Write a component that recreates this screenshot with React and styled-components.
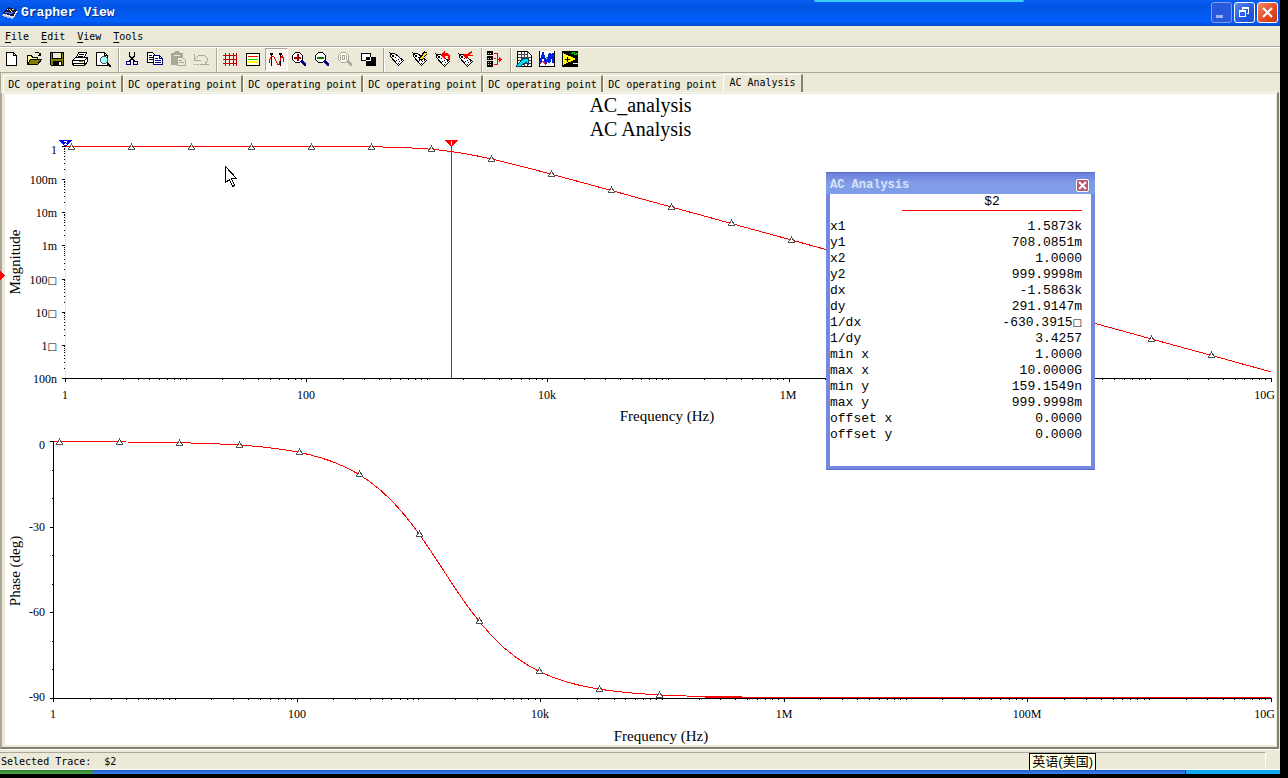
import { useState } from 'react';
import styled, { createGlobalStyle, css } from 'styled-components';

const menus = ['File', 'Edit', 'View', 'Tools'];

const tabs = [
  ...Array.from({ length: 6 }, (_, i) => ({ id: i, label: 'DC operating point' })),
  { id: 6, label: 'AC Analysis' },
];

const cursorRows = [
  ['x1', '1.5873k'],
  ['y1', '708.0851m'],
  ['x2', '1.0000'],
  ['y2', '999.9998m'],
  ['dx', '-1.5863k'],
  ['dy', '291.9147m'],
  ['1/dx', '-630.3915□'],
  ['1/dy', '3.4257'],
  ['min x', '1.0000'],
  ['max x', '10.0000G'],
  ['min y', '159.1549n'],
  ['max y', '999.9998m'],
  ['offset x', '0.0000'],
  ['offset y', '0.0000'],
];

// RC low-pass: 1k / 100n
const CUTOFF = 1591.5;
const magnitudeLog = (d) => -0.5 * Math.log10(1 + (10 ** d / CUTOFF) ** 2);
const phaseDeg = (d) => (-Math.atan(10 ** d / CUTOFF) * 180) / Math.PI;

const Tag = () => (
  <>
    <path d='M1.5 5.5v-3h4l9 7-5 5z' fill='#fff' stroke='#000' />
    <path d='M3 4h2v2H3zM6 6h1v1H6zM7 9h1v1H7zM9 8h1v1H9zM10 10h1v1h-1zM9 12h1v1H9zM12 9h1v1h-1z' fill='#000' />
    <path d='M0 1l3 3' stroke='#000' />
  </>
);

const Lens = ({ color = '#000', handle = '#000080' }) => (
  <>
    <path d='M4.5 1.5h4l3 3v4l-3 3h-4l-3-3v-4z' fill='#fff' stroke={color} />
    <path d='M10 10l5 5M11 9.5l4 4' stroke={handle} strokeWidth='2' />
  </>
);

const icons = {
  New: <path d='M3.5 1.5h7l3 3v10h-10zM10.5 1.5v3h3' fill='#fff' stroke='#000' />,
  Open: (
    <>
      <path d='M1.5 13.5v-9h4l1 2h5v3' fill='#ffff99' stroke='#000' />
      <path d='M1.5 13.5l3-5h11l-4 5z' fill='#808000' stroke='#000' />
      <path d='M8.5 2.5l1-1h3l2 3M14.5 1.5v3h-3' fill='none' stroke='#000' />
    </>
  ),
  Save: (
    <>
      <path d='M1.5 1.5h13v13h-12l-1-1z' fill='#808000' stroke='#000' />
      <path d='M4 2h8v6H4z' fill='#ece9d8' />
      <path d='M3.5 1.5v6h9v-6' fill='none' stroke='#000' />
      <path d='M4 10h9v4H4z' fill='#000' />
      <path d='M10 11h2v3h-2z' fill='#fff' />
    </>
  ),
  Print: (
    <>
      <path d='M4.5 6.5l2-5h8l-2 5z' fill='#fff' stroke='#000' />
      <path d='M7 3.5h5M6 5.5h5' stroke='#000' />
      <path d='M.5 9.5l3-3h12v4l-3 4h-11l-1-2z' fill='#fff' stroke='#000' />
      <path d='M.5 9.5h12l3-3M12.5 9.5v5M1 12.5h11' fill='none' stroke='#000' />
      <path d='M7 10.5h4' stroke='#808000' />
    </>
  ),
  Preview: (
    <>
      <path d='M1.5 1.5h8l3 3v10h-11zM9.5 1.5v3h3' fill='#fff' stroke='#000' />
      <circle cx='9' cy='9' r='3.5' fill='#9ff' stroke='#555' />
      <path d='M12 12l4 3.5' stroke='#000' strokeWidth='2' />
    </>
  ),
  Cut: (
    <>
      <path d='M5.5 1v4l5 5M10.5 1v4l-5 5' fill='none' stroke='#000' />
      <circle cx='4.5' cy='12' r='2' fill='none' stroke='#000080' />
      <circle cx='11.5' cy='12' r='2' fill='none' stroke='#000080' />
    </>
  ),
  Copy: (
    <>
      <path d='M.5 1.5h5l3 3v7h-8z' fill='#fff' stroke='#000' />
      <path d='M2 4.5h3M2 6.5h5M2 8.5h5' stroke='#000' />
      <path d='M6.5 4.5h6l3 3v6h-9z' fill='#fff' stroke='#000080' />
      <path d='M8 7.5h3M8 9.5h6M8 11.5h6M12.5 4.5v3h3' fill='none' stroke='#000080' />
    </>
  ),
  Paste: (
    <>
      <path d='M1 2h3l1-2h4l1 2h3v12H1z' fill='#aca899' />
      <path d='M4 4h6' stroke='#ece9d8' />
      <path d='M7.5 6.5h5l3 3v5h-8z' fill='#ece9d8' stroke='#aca899' />
      <path d='M9 9.5h3M9 11.5h5' stroke='#aca899' />
    </>
  ),
  Undo: (
    <>
      <path d='M1.5 3v6h6M2 8l4-4h5l3 3v3l-2 3' fill='none' stroke='#aca899' />
      <path d='M1 13.5h2M4 13.5h2M7 13.5h9' stroke='#aca899' />
    </>
  ),
  Grid: (
    <path
      d='M1 4.5h14M1 8.5h14M1 12.5h14M3.5 2v13M7.5 2v13M11.5 2v13M14.5 2v13'
      fill='none'
      stroke='#c80000'
    />
  ),
  Legend: (
    <>
      <path d='M1.5 2.5h13v12h-13z' fill='#ffffe1' stroke='#000' />
      <path d='M3 5.5h10' stroke='#f00' />
      <path d='M3 8.5h10' stroke='#00d000' />
      <path d='M3 11h10' stroke='#ff0' strokeWidth='2' />
    </>
  ),
  Cursors: (
    <>
      <path d='M3.5 2v13M12.5 2v13' stroke='#000' />
      <path d='M2 2h3v2H2zM11 2h3v2h-3z' fill='#000' />
      <path d='M1.5 12v-3l2-4h2l2 4 2 4h2l1-6 2-2 1 3v3' fill='none' stroke='#e00000' />
    </>
  ),
  'Zoom In': (
    <>
      <Lens />
      <path d='M3 6.5h7M6.5 3v7' stroke='#a00000' strokeWidth='2' />
    </>
  ),
  'Zoom Out': (
    <>
      <Lens />
      <path d='M3 6.5h7' stroke='#008000' strokeWidth='2' />
    </>
  ),
  'Zoom 100%': (
    <>
      <Lens color='#aca899' handle='#aca899' />
      <path d='M3.5 4v5M5.5 4.5h2v4h-2zM9.5 4v5' fill='none' stroke='#aca899' />
    </>
  ),
  'Reverse Colors': (
    <>
      <path d='M6 6h9v8H6z' fill='#000' stroke='#000' />
      <path d='M1.5 2.5h9v7h-9z' fill='#fff' stroke='#000' />
      <path d='M6 6h4v3H6z' fill='#000' />
      <path d='M10.5 6v3.5H6' fill='none' stroke='#fff' />
    </>
  ),
  Label: <Tag />,
  'Edit Label': (
    <>
      <Tag />
      <path d='M8 9l6-8' stroke='#000' strokeWidth='4' />
      <path d='M9 8l5-6' stroke='#ffe000' strokeWidth='2' />
    </>
  ),
  'Restore Label': (
    <>
      <g transform='translate(0 1)'>
        <Tag />
      </g>
      <path d='M5 4l5-4v2h3l2 3v4h-2V6l-1-1h-2v3z' fill='#f00' />
    </>
  ),
  'Select Label': (
    <>
      <g transform='translate(0 1)'>
        <Tag />
      </g>
      <path d='M5 3h4l5-3v2l-3 2h4v1h-5l-1 3-4-3z' fill='#f00' />
    </>
  ),
  'Merge Traces': (
    <>
      <path d='M0 0h6v4H0zM0 5h6v4H0zM0 10h6v6H0z' fill='#000' />
      <path d='M1 2.5h4M1 7.5h4M1 11.5h4M1 13.5h4' stroke='#ddd' strokeDasharray='1 1' />
      <path d='M7 2.5h3v11H7M7 7.5h2M10 8.5h4' fill='none' stroke='#f00' />
      <path d='M12 6l3 2.5-3 2.5z' fill='#f00' />
    </>
  ),
  'Export to Excel': (
    <>
      <path d='M1.5.5h10l4 4v11h-14z' fill='#fff' stroke='#000' />
      <path
        d='M2 3.5h10M2 6.5h13M2 9.5h13M2 12.5h13M5.5 1v14M8.5 1v14M11.5 1v14'
        fill='none'
        stroke='#444'
      />
      <path d='M0 15l7-7-2-1h7v6l-2-2-5 4H1z' fill='#00e0f0' stroke='#003c60' />
    </>
  ),
  'Export to MathCAD': (
    <>
      <path d='M0 0h16v16H0z' fill='#fff' />
      <path d='M.5 0v15h15V0' fill='none' stroke='#000' />
      <path d='M1 12l3-9 3 9 4-10-1 10 4-10v10' fill='none' stroke='#0020e0' strokeWidth='2' />
      <path d='M1 13l3-3 2 3' fill='none' stroke='#f03030' />
      <path d='M7 6l2 2' stroke='#00b000' />
    </>
  ),
  'Export to LabVIEW': (
    <>
      <path d='M0 0h16v16H0z' fill='#000' />
      <path d='M1 2l13 6L1 14z' fill='#ffff00' />
      <path d='M9 3l3-2 1 3 3-2' fill='none' stroke='#00d000' />
      <path d='M3 8.5h5M5.5 6v5' stroke='#000' />
      <path d='M11 12.5h5' stroke='#ece9d8' />
    </>
  ),
};

const toolGroups = [
  ['New', 'Open', 'Save', 'Print', 'Preview'],
  ['Cut', 'Copy', 'Paste', 'Undo'],
  ['Grid', 'Legend', 'Cursors', 'Zoom In', 'Zoom Out', 'Zoom 100%', 'Reverse Colors'],
  ['Label', 'Edit Label', 'Restore Label', 'Select Label'],
  ['Merge Traces'],
  ['Export to Excel', 'Export to MathCAD', 'Export to LabVIEW'],
];

const disabledTools = ['Paste', 'Undo', 'Zoom 100%'];

const linePoints = (toX, toY) =>
  Array.from({ length: 101 }, (_, i) => `${toX(i / 10).toFixed(1)},${toY(i / 10).toFixed(1)}`).join(' ');

const LogTicks = ({ x0, x1, y }) => {
  const perDecade = (x1 - x0) / 10;
  let d = '';
  for (let decade = 0; decade < 10; decade += 1) {
    for (let n = 1; n < 10; n += 1) {
      const x = Math.round(x0 + (decade + Math.log10(n)) * perDecade) + 0.5;
      d += `M${x} ${y}v${n === 1 && decade % 2 === 0 ? 3 : 1}`;
    }
  }
  return <path d={`${d}M${x1 + 0.5} ${y}v3`} stroke='#000' />;
};

const Markers = ({ from, count, yAt }) =>
  Array.from({ length: count }, (_, i) => {
    const x = from + i * 60;
    const y = Math.round(yAt(x));
    return <path key={x} d={`M${x + 0.5} ${y - 3}l-3 5h6z`} fill='#fff' stroke='#505050' />;
  });

const MagnitudePlot = () => {
  const toX = (d) => 65 + d * 120.6;
  const toY = (d) => 146.5 - magnitudeLog(d) * 33.14;
  const labels = ['1', '100m', '10m', '1m', '100□', '10□', '1□', '100n'];
  let yTicks = '';
  for (let i = 0; i < 7; i += 1) {
    for (let n = 2; n < 10; n += 1) {
      yTicks += `M64 ${Math.round(146 + (i + 1 - Math.log10(n)) * 33.14) + 0.5}h1`;
    }
  }
  return (
    <Plot viewBox='5 142 1271 288' role='img' aria-label='Magnitude over frequency'>
      <path d='M65 378.5h1207' stroke='#000' />
      <LogTicks x0={65} x1={1271} y={379} />
      <path d={yTicks} stroke='#000' />
      <path d='M65.5 146v232' stroke='#ff0' />
      {labels.map((label, i) => {
        const y = Math.round(146 + i * 33.14);
        const boxed = label.endsWith('□');
        return (
          <g key={label}>
            <path d={`M62 ${y + 0.5}h3`} stroke='#000' />
            <TickText x='57' y={i === 0 ? 154 : y + 5} textAnchor='end'>
              {boxed ? label.slice(0, -1) : label}
              {boxed && <MissingGlyph>□</MissingGlyph>}
            </TickText>
          </g>
        );
      })}
      <path d='M451.5 146v232' stroke='#f00' />
      <polyline points={linePoints(toX, toY)} fill='none' stroke='#f00' />
      <Markers from={71} count={20} yAt={(x) => toY((x - 65) / 120.6)} />
      {['1', '100', '10k', '1M'].map((label, i) => (
        <TickText key={label} x={65 + i * 241} y='399' textAnchor='middle'>
          {label}
        </TickText>
      ))}
      <TickText x='1275' y='399' textAnchor='end'>10G</TickText>
      <AxisText x='667' y='421' textAnchor='middle'>Frequency (Hz)</AxisText>
      <AxisText transform='translate(20 262) rotate(-90)' textAnchor='middle'>Magnitude</AxisText>
      <path d='M59 140h13l-6 7h-1z' fill='#00f' />
      <path d='M64 141.5h3M66.5 142v1M65.5 143v1M64 144.5h3' stroke='#fff' />
      <path d='M445 140h13l-6 7h-1z' fill='#f00' />
      <path d='M451.5 141v4' stroke='#fff' />
      <path d='M0 271l5 4.5-5 4.5z' fill='#f00' />
      <path d='M225.5 166.5v16l4-3 3 7 2-1-3-7h5z' fill='#fff' stroke='#000' />
    </Plot>
  );
};

const PhasePlot = () => {
  const toX = (d) => 53 + d * 121.8;
  const toY = (d) => 441.6 - (phaseDeg(d) * 256) / 90;
  return (
    <Plot viewBox='5 430 1271 315' role='img' aria-label='Phase over frequency'>
      <polyline points={linePoints(toX, toY)} fill='none' stroke='#f00' />
      <path d='M53.5 441v257M53 698.5h1219' stroke='#000' />
      <path d='M705 697.5h98' stroke='#f00' />
      <LogTicks x0={53} x1={1271} y={699} />
      {Array.from({ length: 10 }, (_, i) => {
        const y = Math.round(441 + i * 28.55) + 0.5;
        return <path key={i} d={i % 3 ? `M52 ${y}h1` : `M50 ${y}h3`} stroke='#000' />;
      })}
      {['0', '-30', '-60', '-90'].map((label, i) => (
        <TickText key={label} x='45' y={i === 0 ? 449 : 446 + i * 85} textAnchor='end'>
          {label}
        </TickText>
      ))}
      <Markers from={59} count={11} yAt={(x) => toY((x - 53) / 121.8)} />
      {['1', '100', '10k', '1M', '100M'].map((label, i) => (
        <TickText key={label} x={53 + Math.round(i * 243.6)} y='718' textAnchor='middle'>
          {label}
        </TickText>
      ))}
      <TickText x='1275' y='718' textAnchor='end'>10G</TickText>
      <AxisText x='661' y='741' textAnchor='middle'>Frequency (Hz)</AxisText>
      <AxisText transform='translate(20 571) rotate(-90)' textAnchor='middle'>Phase (deg)</AxisText>
    </Plot>
  );
};

const App = () => {
  const [activeTab, setActiveTab] = useState(6);
  const [isPanelOpen, setPanelOpen] = useState(true);

  const togglePanel = () => {
    setPanelOpen(!isPanelOpen);
  };

  return (
    <>
      <GlobalStyle />
      <Desktop>
        <Notch />
        <TitleBar>
          <AppIcon viewBox='0 0 16 16' aria-hidden='true'>
            <path d='M0 11l5-7 11 2-5 8z' fill='#b8c4e0' />
            <path d='M1 8l5-6 9 3-4 7z' fill='#101850' />
            <path d='M1 9l10 3 4-6' fill='none' stroke='#fff' strokeDasharray='2 1' />
            <path d='M5 5l2-1 2 3 2-3 2 2' fill='none' stroke='#ff0' strokeDasharray='1 1' />
            <path d='M3 8l3-1 2 2 3-2' fill='none' stroke='#6a80f0' />
          </AppIcon>
          <Title>Grapher View</Title>
          <WindowButton type='button' aria-label='Minimize' $dim>
            <svg viewBox='0 0 19 19'><path d='M4 12h7v3H4z' fill='#9db4f0' /></svg>
          </WindowButton>
          <WindowButton type='button' aria-label='Restore'>
            <svg viewBox='0 0 19 19' shapeRendering='crispEdges'>
              <path d='M7 4h7v2H7zM7 6h1v1H7zM13 6h1v5h-2v-1h1zM4 7h7v2H4zM4 9h1v5H4zM10 9h1v5h-1zM4 13h7v1H4z' fill='#fff' />
            </svg>
          </WindowButton>
          <WindowButton type='button' aria-label='Close' $danger>
            <svg viewBox='0 0 19 19'><path d='M5 5l9 9M14 5l-9 9' stroke='#fff' strokeWidth='2' /></svg>
          </WindowButton>
        </TitleBar>
        <MenuBar>
          {menus.map((menu) => (
            <MenuButton key={menu} type='button'>
              <u>{menu[0]}</u>
              {menu.slice(1)}
            </MenuButton>
          ))}
        </MenuBar>
        <Toolbar>
          {toolGroups.map((group) => (
            <ToolGroup key={group[0]}>
              {group.map((name) => (
                <ToolButton
                  key={name}
                  type='button'
                  aria-label={name}
                  disabled={disabledTools.includes(name)}
                  $pressed={name === 'Cursors' && isPanelOpen}
                  onClick={name === 'Cursors' ? togglePanel : undefined}
                >
                  <ToolIcon viewBox='0 0 16 16'>{icons[name]}</ToolIcon>
                </ToolButton>
              ))}
            </ToolGroup>
          ))}
        </Toolbar>
        <TabBar role='tablist'>
          {tabs.map(({ id, label }) => (
            <Tab
              key={id}
              type='button'
              role='tab'
              aria-selected={activeTab === id}
              $active={activeTab === id}
              onClick={() => setActiveTab(id)}
            >
              {label}
            </Tab>
          ))}
        </TabBar>
        <Frame>
          <Sheet>
            <GraphTitle>AC_analysis</GraphTitle>
            <GraphTitle>AC Analysis</GraphTitle>
            <MagnitudePlot />
            <PhasePlot />
            {isPanelOpen && (
              <Panel>
                <PanelHeader>
                  <PanelTitle>AC Analysis</PanelTitle>
                  <PanelClose type='button' aria-label='Close' onClick={togglePanel}>
                    <svg viewBox='0 0 11 11'><path d='M2 2l7 7M9 2l-7 7' stroke='#fff' strokeWidth='2' /></svg>
                  </PanelClose>
                </PanelHeader>
                <PanelBody>
                  <CursorTable>
                    <thead>
                      <tr>
                        <NameHead />
                        <TraceHead scope='col'>$2</TraceHead>
                      </tr>
                    </thead>
                    <tbody>
                      {cursorRows.map(([name, value]) => (
                        <tr key={name}>
                          <NameCell scope='row'>{name}</NameCell>
                          <ValueCell>
                            {value.replace('□', '')}
                            {value.endsWith('□') && <PanelGlyph>□</PanelGlyph>}
                          </ValueCell>
                        </tr>
                      ))}
                    </tbody>
                  </CursorTable>
                </PanelBody>
              </Panel>
            )}
          </Sheet>
        </Frame>
        <StatusBar>
          <StatusText>
            <span>Selected Trace:</span>
            <span>$2</span>
          </StatusText>
          <LanguageTip>英语(美国)</LanguageTip>
        </StatusBar>
        <Taskbar>
          <StartEdge />
          <TrayEdge />
        </Taskbar>
      </Desktop>
    </>
  );
};

const GlobalStyle = createGlobalStyle`
  * {
    box-sizing: border-box;
  }

  body {
    margin: 0;
    background: #000000;
    color: #000000;
    font-family: 'DejaVu Sans Mono', 'Noto Sans CJK SC', monospace;
    font-size: 10px;
  }

  button {
    padding: 0;
    border: none;
    background: none;
    color: inherit;
    font: inherit;
  }
`;

const Desktop = styled.div`
  position: relative;
  display: flex;
  flex-direction: column;
  margin-right: 8px;
  background: #ece9d8;
`;

const Notch = styled.div`
  position: absolute;
  top: 0;
  right: 20%;
  width: 210px;
  height: 2px;
  border-radius: 0 0 2px 2px;
  background: #38d0f8;
`;

const TitleBar = styled.header`
  display: flex;
  align-items: center;
  gap: 2px;
  height: 26px;
  padding: 0 2px 1px;
  background: linear-gradient(#0a5cf0, #0054e3 30%, #0060fc 80%, #0048d0);
`;

const AppIcon = styled.svg`
  width: 16px;
  height: 16px;
  shape-rendering: crispEdges;
`;

const Title = styled.h1`
  flex: 1;
  margin: 0;
  padding-left: 1px;
  font-family: 'Liberation Mono', monospace;
  font-size: 13px;
  font-weight: bold;
  color: #ffffff;
  text-shadow: 1px 1px #0a2a80;
`;

const WindowButton = styled.button`
  width: 21px;
  height: 21px;
  border: 1px solid ${({ $dim }) => ($dim ? '#7f9df0' : '#ffffff')};
  border-radius: 3px;
  background: linear-gradient(135deg, #5a88f0, #2058e0 60%, #1c50d0);

  ${({ $dim }) => $dim && css`
    background: #2a58dc;
  `}

  ${({ $danger }) => $danger && css`
    background: linear-gradient(135deg, #f08a68, #e04820 60%, #c83a10);
  `}

  svg {
    display: block;
  }
`;

const MenuBar = styled.nav`
  display: flex;
  height: 22px;
  border-bottom: 1px solid #ffffff;
  box-shadow: inset 0 -1px #aca899;
`;

const MenuButton = styled.button`
  height: 20px;
  padding: 0 7px 0 5px;

  u {
    text-underline-offset: 2px;
  }
`;

const Toolbar = styled.div`
  display: flex;
  height: 25px;
  border-bottom: 1px solid #aca899;
`;

const ToolGroup = styled.div`
  display: flex;

  & + & {
    padding-left: 2px;
    margin-left: 3px;
    border-left: 1px solid #aca899;
    box-shadow: inset 1px 0 #ffffff;
  }
`;

const ToolButton = styled.button`
  display: flex;
  align-items: center;
  justify-content: center;
  width: 23px;
  height: 23px;
  padding: 0 1px 1px 0;

  ${({ $pressed }) => $pressed && css`
    border: 1px solid;
    border-color: #aca899 #ffffff #ffffff #aca899;
    background: #f6f4ec;
  `}
`;

const ToolIcon = styled.svg`
  flex: none;
  width: 16px;
  height: 16px;
  shape-rendering: crispEdges;
`;

const TabBar = styled.div`
  display: flex;
  align-items: flex-end;
  height: 20px;
  padding-left: 2px;
  border-left: 1px solid #aca899;
`;

const Tab = styled.button`
  flex: none;
  width: 120px;
  height: 17px;
  margin-bottom: 1px;
  border-top: 1px solid #ffffff;
  border-left: 1px solid #ffffff;
  border-right: 2px solid #85816f;
  white-space: nowrap;

  ${({ $active }) => $active && css`
    width: 80px;
    height: 19px;
    margin-bottom: 0;
    padding-bottom: 3px;
  `}

  &:nth-last-child(2) {
    border-right-color: transparent;
  }
`;

const Frame = styled.main`
  padding: 1px 1px 2px 3px;
  border-left: 2px solid #aca899;
  border-right: 2px solid #85816f;
  border-bottom: 2px solid #85816f;
  border-top: 1px solid #f8f7f0;
  margin-right: 1px;
  margin-top: -1px;
`;

const Sheet = styled.div`
  position: relative;
  background: #ffffff;
`;

const GraphTitle = styled.h2`
  margin: 0;
  padding-bottom: 2px;
  font-family: 'Liberation Serif', serif;
  font-size: 20px;
  font-weight: normal;
  line-height: 22px;
  text-align: center;
`;

const Plot = styled.svg`
  display: block;
  width: 100%;
  overflow: visible;
  shape-rendering: crispEdges;
`;

const TickText = styled.text`
  font-family: 'Liberation Serif', serif;
  font-size: 12px;
`;

const AxisText = styled.text`
  font-family: 'Liberation Serif', serif;
  font-size: 15px;
`;

const MissingGlyph = styled.tspan`
  font-family: 'DejaVu Sans', sans-serif;
  font-size: 10px;
`;

const Panel = styled.section`
  position: absolute;
  top: 78px;
  right: 181px;
  width: 269px;
  padding: 0 4px 3px;
  border: solid #5c6cc8;
  border-width: 1px 0;
  background: #7388de;
  font-family: 'Liberation Mono', monospace;
`;

const PanelHeader = styled.header`
  display: flex;
  align-items: center;
  justify-content: space-between;
  height: 21px;
  margin: 0 -4px;
  padding: 3px 6px 0 4px;
  background: linear-gradient(#6b80dc, #829ce8 50%, #7f9ee8);
`;

const PanelTitle = styled.h3`
  margin: 0;
  font-size: 12px;
  color: #d8e4f8;
`;

const PanelClose = styled.button`
  width: 13px;
  height: 13px;
  border: 1px solid #ffffff;
  border-radius: 2px;
  background: #b85870;

  svg {
    display: block;
  }
`;

const PanelBody = styled.div`
  padding: 0 9px 23px 0;
  background: #ffffff;
`;

const CursorTable = styled.table`
  width: 100%;
  border-collapse: separate;
  border-spacing: 0;
  font-size: 13px;
  line-height: 16px;

  th,
  td {
    padding: 0;
    font-weight: normal;
  }

  thead::after {
    content: '';
    display: block;
    height: 8px;
  }
`;

const NameHead = styled.td`
  width: 72px;
`;

const TraceHead = styled.th`
  border-bottom: 1px solid #ff0000;
`;

const NameCell = styled.th`
  text-align: left;
`;

const ValueCell = styled.td`
  text-align: right;
`;

const PanelGlyph = styled.span`
  font-family: 'DejaVu Sans', sans-serif;
  font-size: 10px;
  line-height: 1;
`;

const StatusBar = styled.footer`
  position: relative;
  height: 21px;
  padding: 2px 14px 0 0;
  border-top: 1px solid #ffffff;
  border-bottom: 1px solid #ffffff;
`;

const StatusText = styled.p`
  display: flex;
  align-items: center;
  gap: 13px;
  height: 17px;
  margin: 0;
  padding-left: 1px;
  border-top: 1px solid #aca899;
  border-right: 1px solid #ffffff;
`;

const LanguageTip = styled.div`
  position: absolute;
  right: 184px;
  bottom: -1px;
  padding: 0 2px;
  border: 1px solid #000000;
  border-bottom: none;
  background: #ffffe1;
  font-family: 'Liberation Sans', 'Noto Sans CJK SC', sans-serif;
  font-size: 13px;
  line-height: 16px;
`;

const Taskbar = styled.div`
  display: flex;
  justify-content: space-between;
  height: 4px;
  background: linear-gradient(#2458c8, #3c84f0);
`;

const StartEdge = styled.div`
  width: 93px;
  border-bottom-right-radius: 3px;
  background: linear-gradient(#2c7c2c, #4cac4c);
`;

const TrayEdge = styled.div`
  width: 95px;
  border-left: 1px solid #083878;
  background: #12a8f0;
`;

export default App;
